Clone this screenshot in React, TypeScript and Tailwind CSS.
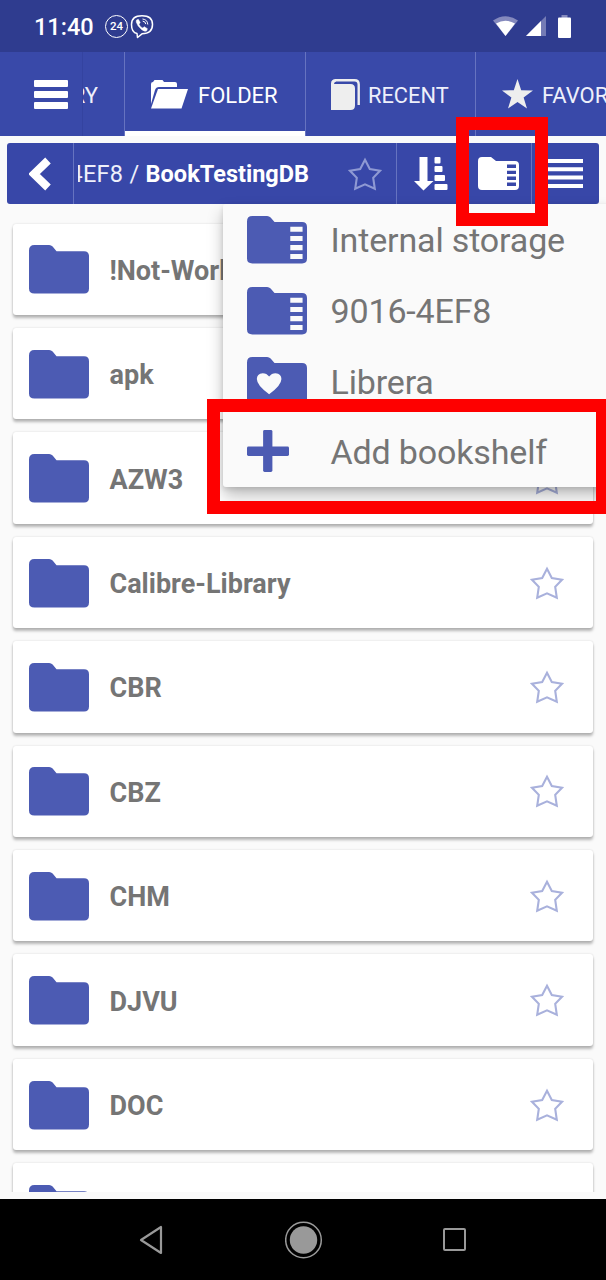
import React from "react";

const folders = ["!Not-Working", "apk", "AZW3", "Calibre-Library", "CBR", "CBZ", "CHM", "DJVU", "DOC", "DOCX"];

function FolderIcon({ children }: { children?: React.ReactNode }) {
  return (
    <svg className="block h-full w-full" viewBox="0 0 61 49" preserveAspectRatio="none">
      <path
        d="M5.500 0H20.500q2 0 3.500 1.600L28 6.200H56q5 0 5 5V43.500q0 5-5 5H5.500q-5.500 0-5.500-5V5.500Q0 0 5.500 0Z"
        fill="#4c5bb3"
      />
      {children}
    </svg>
  );
}

function StarOutline({ className }: { className: string }) {
  return (
    <svg className={className} viewBox="0 0 34 34" fill="none" stroke="currentColor" strokeWidth="2.100">
      <path d="M17 2.800L21.800 12L32 13.800L25.200 20.800L26.800 31.800L17 27.400L7.200 31.800L8.800 20.800L2 13.800L12.200 12Z" />
    </svg>
  );
}

function StatusBar() {
  return (
    <div className="flex h-[52px] shrink-0 items-center bg-[#2f3c8f] pr-[35px] pl-[34px] text-white">
      <span className="w-[71px] pt-[2px] text-[23.500px] leading-7 font-medium">11:40</span>
      <div className="flex size-[23px] items-center justify-center rounded-full border-[1.500px] border-white pt-[1px] text-[11.500px] leading-none font-medium">
        24
      </div>
      <svg className="ml-[2px] h-[25px] w-[24px]" viewBox="0 0 24 25" fill="none" stroke="white">
        <path d="M7 19.500Q1.500 18.500 1.500 10.500Q1.500 1.800 12 1.800Q22.500 1.800 22.500 10.500Q22.500 19.500 12 19.800L7.500 23.500Z" strokeWidth="1.500" strokeLinejoin="round" />
        <path d="M6.500 6L8.300 5.300L10.200 8.500L9 10.300Q10 13 12.800 14L14.300 12.700L17.400 14.700L16.500 17Q14.800 17.800 11.800 15.700Q7.500 12.500 6.200 8Z" fill="white" strokeWidth="0.500" />
        <path d="M12.500 5Q17.500 5.500 17.800 10.500M12.700 7.100Q15.600 7.500 15.800 10.100" strokeWidth="1" />
      </svg>
      <svg className="ml-auto h-[22px] w-[25px]" viewBox="0 0 25 22">
        <path d="M0 5.500Q12.500-3 25 5.500L12.500 21Z" fill="#8489bd" />
        <path d="M3 8.500Q12.500 3 22 8.500L12.500 21Z" fill="white" />
      </svg>
      <svg className="ml-2 h-[20px] w-[20px]" viewBox="0 0 20 20">
        <path d="M0 20L20 0V20Z" fill="#747bb5" />
        <path d="M0 20L15 5V20Z" fill="white" />
      </svg>
      <svg className="ml-3 h-[23px] w-[13px]" viewBox="0 0 13 23">
        <path d="M3.500 0H9.500V3H3.500Z" fill="#8489bd" />
        <rect y="2.500" width="13" height="20.500" rx="1" fill="white" />
      </svg>
    </div>
  );
}

function Tabs() {
  return (
    <div className="flex h-[84px] w-[606px] shrink-0 overflow-hidden bg-[#3949a9] text-[22px] text-[#eef0fb]">
      <div className="flex w-[83px] shrink-0 items-center border-r border-[#3443a0] pl-[34px]">
        <svg className="h-[29px] w-[34px]" viewBox="0 0 34 29" fill="white">
          <rect width="34" height="7" rx="1" />
          <rect y="11" width="34" height="7" rx="1" />
          <rect y="22" width="34" height="7" rx="1" />
        </svg>
      </div>
      <div className="flex w-[42px] shrink-0 items-center justify-end overflow-hidden border-r border-[#6673c0] pt-[3px] pr-[26px]">
        LIBRARY
      </div>
      <div className="flex w-[180px] shrink-0 items-center border-b-[5px] border-white pt-[5px] pl-[25px] text-white">
        <svg className="h-[29px] w-[39px]" viewBox="0 0 39 29" fill="white">
          <path d="M1 24V4Q1 2 3 2L4.500 0H12.500L14 2H25Q27 2 27 4V7H9Q6 7 5 10Z" />
          <path d="M8 9H38L31.500 28.500H1Z" />
        </svg>
        <span className="ml-[9px] pt-[2px]">FOLDER</span>
      </div>
      <div className="flex w-[171px] shrink-0 items-center border-x border-[#6673c0] pt-[1px] pl-[25px]">
        <svg className="h-[31px] w-[29px]" viewBox="0 0 29 31">
          <path d="M4 1.300H23.500Q27.700 1.300 27.700 5.500V26" fill="none" stroke="#eee" strokeWidth="2.400" />
          <path d="M0 31V4.500Q0 0 5 0V2.500Q3 3 3 5H19.500Q24 5 24 9.500V26.500Q24 31 19.500 31Z" fill="#eee" />
        </svg>
        <span className="ml-[8px] pt-[3px] text-[21.800px]">RECENT</span>
      </div>
      <div className="flex w-[180px] shrink-0 items-center pl-[26px]">
        <svg className="h-[30px] w-[31px]" viewBox="0 0 31 30" fill="#eee">
          <path d="M15.500 0L19.200 11.200L31 11.400L21.600 18.500L25 29.500L15.500 22.900L6 29.500L9.400 18.500L0 11.400L11.800 11.200Z" />
        </svg>
        <span className="ml-[9px] pt-[2px]">FAVORITES</span>
      </div>
    </div>
  );
}

function Toolbar() {
  return (
    <div className="mx-[7px] mt-[7px] flex h-[61px] shrink-0 overflow-hidden rounded-[3px] bg-[#3847a8] text-white">
      <div className="flex w-[67px] shrink-0 items-center border-r border-[#6673c0] pl-[22px]">
        <svg className="h-[34px] w-[22px]" viewBox="0 0 22 34">
          <path d="M19 3.500L5 17L19 30.500" fill="none" stroke="white" strokeWidth="8" />
        </svg>
      </div>
      <div className="ml-[4px] flex w-[231px] shrink-0 items-center justify-end overflow-hidden pt-[2px] text-[23.500px] whitespace-pre">
        <span className="tracking-[0.300px] text-[#eef0fb]">/ 9016-4EF8 / </span>
        <span className="font-bold">BookTestingDB</span>
      </div>
      <div className="ml-auto flex w-[87px] items-center border-r border-[#6673c0] pl-[38px]">
        <StarOutline className="size-[34px] text-[#8f99d3]" />
      </div>
      <div className="flex w-[68px] items-center pl-[17px]">
        <svg className="h-[34px] w-[35px]" viewBox="0 0 35 34" fill="white">
          <path d="M5.500 0H13.500V24H19.500L9.500 33.500L0 24H5.500Z" />
          <rect x="20.500" y="0" width="6" height="6.500" rx="1" />
          <rect x="20.500" y="9" width="8" height="6" rx="1" />
          <rect x="20.500" y="18" width="10.500" height="6" rx="1" />
          <rect x="20.500" y="27" width="13" height="6" rx="1" />
        </svg>
      </div>
      <div className="flex w-[67px] items-center border-r border-[#6673c0] pl-[13px]">
        <svg className="h-[33px] w-[41px]" viewBox="0 0 41 33">
          <path d="M4 0H13L18 4H37Q41 4 41 8V29Q41 33 37 33H4Q0 33 0 29V4Q0 0 4 0Z" fill="white" />
          <path d="M29 7.500H38V11H29ZM29 13.700H38V17H29ZM29 19.500H38V23H29ZM29 25.500H38V29H29Z" fill="#3847a8" />
        </svg>
      </div>
      <div className="flex w-[67px] items-center pl-[16px]">
        <svg className="h-[29px] w-[35px]" viewBox="0 0 35 29" fill="white">
          <path d="M0 0H35V4H0ZM0 8.300H35V12.300H0ZM0 16.600H35V20.600H0ZM0 25H35V29H0Z" />
        </svg>
      </div>
    </div>
  );
}

function FolderRow({ name }: { name: string }) {
  return (
    <div className="flex h-[91.400px] shrink-0 items-center rounded-[3px] bg-white pr-[29px] pl-[15.500px] shadow-[0_3px_3px_rgba(0,0,0,0.27),0_0_2px_rgba(0,0,0,0.15)]">
      <div className="mt-[1px] h-[49px] w-[60px]">
        <FolderIcon />
      </div>
      <span className="ml-[21px] pt-[3px] text-[27px] leading-8 font-bold text-[#757575]">{name}</span>
      <StarOutline className="ml-auto size-[34px] text-[#a9b1dc]" />
    </div>
  );
}

function MenuItem({ icon, label }: { icon: React.ReactNode; label: string }) {
  return (
    <div className="flex h-[70.700px] items-center pl-[24px]">
      <div className="mt-[1px] h-[48px] w-[60px]">{icon}</div>
      <span className="ml-[23.500px] pt-[2px] text-[34px] leading-10 tracking-[-0.150px] whitespace-nowrap text-[#757575]">{label}</span>
    </div>
  );
}

const storageIcon = (
  <FolderIcon>
    <path d="M44 11H56.500V16.200H44ZM44 20.300H56.500V25.500H44ZM44 29.700H56.500V35H44ZM44 38.800H56.500V44H44Z" fill="#fafafa" />
  </FolderIcon>
);

const heartIcon = (
  <FolderIcon>
    <path d="M22.500 38Q10 29 10 22.500Q10 17 16 16.500Q20 16.500 22.500 20Q25 16.500 29 16.500Q35 17 35 22.500Q35 29 22.500 38Z" fill="#fafafa" />
  </FolderIcon>
);

const plusIcon = (
  <svg className="mt-[2px] h-[42px] w-[42px]" viewBox="0 0 43 43" fill="#4c5bb3">
    <rect x="16.500" width="9.500" height="43" rx="1.500" />
    <rect y="17" width="43" height="9.500" rx="1.500" />
  </svg>
);

function BookshelfMenu() {
  return (
    <div className="absolute top-[204px] left-[223px] h-[283px] w-[390px] rounded-[3px] bg-[#fafafa] shadow-[0_9px_16px_rgba(0,0,0,0.25),0_2px_5px_rgba(0,0,0,0.12)]">
      <MenuItem icon={storageIcon} label="Internal storage" />
      <MenuItem icon={storageIcon} label="9016-4EF8" />
      <MenuItem icon={heartIcon} label="Librera" />
      <MenuItem icon={plusIcon} label="Add bookshelf" />
    </div>
  );
}

function NavigationBar() {
  return (
    <div className="flex h-[81px] shrink-0 items-center justify-between bg-black pr-[139px] pl-[139px]">
      <svg className="h-[30px] w-[25px]" viewBox="0 0 25 30" fill="none" stroke="#999" strokeWidth="2.200" strokeLinejoin="round">
        <path d="M2 15L22 2V28Z" />
      </svg>
      <svg className="size-[38px]" viewBox="0 0 38 38">
        <circle cx="18.500" cy="19" r="17.800" fill="none" stroke="#999" strokeWidth="1.500" />
        <circle cx="18.500" cy="19" r="13.700" fill="#999" />
      </svg>
      <div className="mr-[1px] h-[23px] w-[23px] rounded-[2px] border-[2px] border-[#999]" />
    </div>
  );
}

export default function App() {
  return (
    <div className="relative flex h-[1280px] w-[606px] flex-col overflow-hidden bg-[#fafafa] font-['Roboto',sans-serif]">
      <StatusBar />
      <Tabs />
      <Toolbar />
      <div className="flex h-[988px] shrink-0 flex-col gap-[13px] overflow-hidden px-[13px] pt-[19.700px]">
        {folders.map((name) => (
          <FolderRow key={name} name={name} />
        ))}
      </div>
      <div className="h-[7px] shrink-0" />
      <NavigationBar />
      <BookshelfMenu />
      <div className="absolute top-[117px] left-[456px] h-[109px] w-[92px] border-[13px] border-[#fe0000]" />
      <div className="absolute top-[399px] left-[207px] h-[115px] w-[402px] border-[13px] border-[#fe0000]" />
    </div>
  );
}
